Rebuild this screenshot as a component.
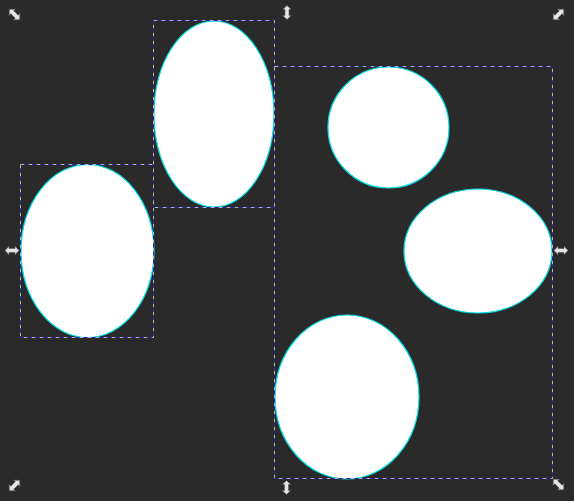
import React from "react";

function Arrow({ x, y, r, s = 1 }) {
  return (
    <g transform={`translate(${x} ${y}) rotate(${r}) scale(${s})`}>
      <path
        d="M-7,0 L-3,-4.2 L-3,-2 L3,-2 L3,-4.2 L7,0 L3,4.2 L3,2 L-3,2 L-3,4.2 Z"
        fill="#e4e4e4"
        stroke="#5a5a5a"
        strokeWidth="0.6"
        strokeLinejoin="miter"
      />
    </g>
  );
}

function DashRect({ x, y, w, h }) {
  return (
    <g fill="none" strokeWidth="1">
      <rect x={x} y={y} width={w} height={h} stroke="#b4b4b4" strokeDasharray="4 4" />
      <rect x={x} y={y} width={w} height={h} stroke="#2323b0" strokeDasharray="4 4" strokeDashoffset="4" />
    </g>
  );
}

export default function App() {
  return (
    <div className="w-[574px] h-[501px] bg-[#2a2a2a] overflow-hidden">
      <svg width="574" height="501" viewBox="0 0 574 501" className="block">
        <g fill="#ffffff" stroke="#00e0e6" strokeWidth="1.2">
          <ellipse cx="87.5" cy="251" rx="66.5" ry="86.5" />
          <ellipse cx="214" cy="114" rx="60" ry="93" />
          <ellipse cx="388.5" cy="127.5" rx="60.5" ry="60.5" />
          <ellipse cx="478" cy="251" rx="74" ry="62" />
          <ellipse cx="347" cy="397" rx="72" ry="82" />
        </g>
        <DashRect x={20.5} y={164.5} w={133} h={173} />
        <DashRect x={153.5} y={20.5} w={121} h={187} />
        <DashRect x={274.5} y={66.5} w={278} h={412} />
        <Arrow x={14.5} y={14.5} r={45} s={1.05} />
        <Arrow x={287} y={12.5} r={90} />
        <Arrow x={558.5} y={14.5} r={-45} s={1.05} />
        <Arrow x={12} y={250.5} r={0} />
        <Arrow x={561} y={250.5} r={0} />
        <Arrow x={14.5} y={485.5} r={-45} s={1.05} />
        <Arrow x={286.5} y={487.5} r={90} />
        <Arrow x={558.5} y={484.5} r={45} s={1.05} />
      </svg>
    </div>
  );
}
